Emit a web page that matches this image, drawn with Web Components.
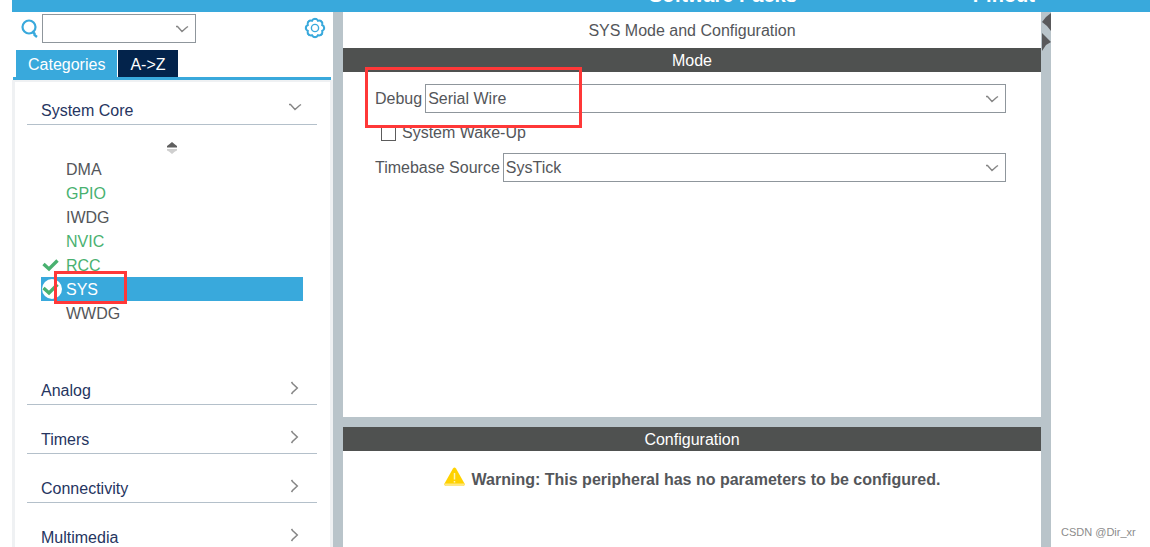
<!DOCTYPE html>
<html lang="en">
<head>
<meta charset="utf-8">
<meta name="viewport" content="width=device-width, initial-scale=1">
<title>SYS Mode and Configuration</title>
<style>
  :root {
    --blue: #39a9dc;
    --navy: #03234b;
    --grey: #54565a;
    --green: #49b170;
    --bar: #4f5150;
    --split: #b9c4ca;
    --edge: #8f969c;
    --mark: #ff3838;
  }
  html, body { height: 100%; }
  body {
    margin: 0;
    background: #fff;
    color: var(--grey);
    font: 16px/24px "Liberation Sans", Arial, sans-serif;
    overflow: hidden;
  }
</style>
</head>
<body>
<cube-app></cube-app>

<script>
/* ------------------------------------------------------------ */
/* Helpers                                                      */
/* ------------------------------------------------------------ */

const CHEVRON_DOWN = `
  <svg class="chevron" width="14" height="9" viewBox="0 0 14 9" fill="none" aria-hidden="true">
    <path d="M1 1.5 2.5 1.5 7 6.5 11.5 2.5 13 1.5" stroke="#868686" stroke-width="1.4"/>
  </svg>`;

const CHEVRON_RIGHT = `
  <svg class="chevron" width="9" height="14" viewBox="0 0 9 14" fill="none" aria-hidden="true">
    <path d="M1.5 1 2.5 2.5 7.3 7 2.5 11.5 1.5 13" stroke="#868686" stroke-width="1.5"/>
  </svg>`;

function render(el, markup) {
  const template = document.createElement('template');
  template.innerHTML = markup;
  el.attachShadow({ mode: 'open' }).appendChild(template.content.cloneNode(true));
}

/* ------------------------------------------------------------ */
/* Top bar                                                      */
/* ------------------------------------------------------------ */

class TopBar extends HTMLElement {
  constructor() {
    super();
    // Only the foot of the menu shows: the bar is scrolled up.
    render(this, `
      <style>
        :host { display: block; height: 12px; overflow: hidden; background: var(--blue); }
        nav {
          height: 100%;
          box-sizing: border-box;
          padding: 0 115px 5px 0;
          display: flex;
          align-items: flex-end;
          justify-content: flex-end;
          gap: 176px;
        }
        a { color: #fff; font-size: 20px; font-weight: bold; text-decoration: none; }
      </style>
      <nav>
        <a href="#packs">Software Packs</a>
        <a href="#pinout">Pinout</a>
      </nav>
    `);
  }
}

/* ------------------------------------------------------------ */
/* Form controls                                                */
/* ------------------------------------------------------------ */

/** A label and a drop-down. Its <option> children become the choices. */
class ComboField extends HTMLElement {
  constructor() {
    super();
    render(this, `
      <style>
        :host { display: flex; align-items: center; gap: 3px; position: relative; }
        label { padding-top: 1px; white-space: nowrap; }
        :host([compact]) { gap: 4px; }
        :host([compact]) label { display: flex; padding: 0; }
        .box { flex: 1; min-width: 0; position: relative; display: flex; }
        select {
          appearance: none;
          width: 100%;
          height: 29px;
          margin: 0;
          padding: 1px 28px 0 2px;
          border: 1px solid var(--edge);
          border-radius: 0;
          background: #fff;
          color: inherit;
          font: inherit;
        }
        .chevron { position: absolute; right: 7px; top: 11px; pointer-events: none; }
      </style>
      <label for="combo"><slot name="icon"></slot><span></span></label>
      <div class="box"><select id="combo"></select>${CHEVRON_DOWN}</div>
      <slot name="mark"></slot>
    `);
  }

  connectedCallback() {
    this.shadowRoot.querySelector('span').textContent = this.getAttribute('label') || '';
    const select = this.shadowRoot.querySelector('select');
    if (this.hasAttribute('hint')) select.setAttribute('aria-label', this.getAttribute('hint'));
    this.querySelectorAll('option').forEach((option) => select.appendChild(option));
  }
}

class CheckField extends HTMLElement {
  constructor() {
    super();
    render(this, `
      <style>
        :host { display: flex; align-items: center; height: 40px; padding-left: 6px; }
        label { display: flex; align-items: center; gap: 6px; }
        input {
          appearance: none;
          box-sizing: border-box;
          width: 15px;
          height: 15px;
          margin: 0;
          border: 1px solid #5c5c5c;
          background: #fff;
        }
        input:checked { background: var(--blue); }
      </style>
      <label><input type="checkbox"><slot></slot></label>
    `);
  }
}

/** Red outline drawn over whatever holds it. */
class MarkBox extends HTMLElement {
  constructor() {
    super();
    render(this, `
      <style>
        :host {
          position: absolute;
          z-index: 2;
          box-sizing: border-box;
          border: 3px solid var(--mark);
          pointer-events: none;
        }
      </style>
    `);
  }
}

/* ------------------------------------------------------------ */
/* Sidebar                                                      */
/* ------------------------------------------------------------ */

class SearchRow extends HTMLElement {
  constructor() {
    super();
    render(this, `
      <style>
        :host { display: flex; justify-content: space-between; height: 36px; padding: 2px 7px 0 9px; }
        combo-field { width: 175px; height: 29px; }
        button { align-self: flex-start; margin-top: 3px; padding: 0; border: 0; background: none; display: flex; }
      </style>
      <combo-field compact hint="Search">
        <svg slot="icon" width="17" height="19" viewBox="0 0 17 19" fill="none" stroke="#39a9dc" aria-hidden="true">
          <circle cx="8" cy="8" r="6.5" stroke-width="2.2"/>
          <path d="M11 12.5 13.5 14.5V16L16 18" stroke-width="2.4"/>
        </svg>
        <option></option>
      </combo-field>
      <button aria-label="Settings">
        <svg width="22" height="22" viewBox="0 0 22 22" fill="none" stroke="#39a9dc" aria-hidden="true">
          <path d="M18.2 14A3.3 3.3 0 0 1 14 18.2A3.3 3.3 0 0 1 8 18.2A3.3 3.3 0 0 1 3.8 14A3.3 3.3 0 0 1 3.8 8A3.3 3.3 0 0 1 8 3.8A3.3 3.3 0 0 1 14 3.8A3.3 3.3 0 0 1 18.2 8A3.3 3.3 0 0 1 18.2 14Z" stroke-width="2"/>
          <circle cx="11" cy="11" r="9.2" stroke-width="1.8" stroke-dasharray="3 4.225" stroke-dashoffset="1.5"/>
          <circle cx="11" cy="11" r="3.6" stroke-width="1.4"/>
        </svg>
      </button>
    `);
  }
}

class TabStrip extends HTMLElement {
  constructor() {
    super();
    render(this, `
      <style>
        :host {
          display: block;
          margin: 0 2px 0 1px;
          padding: 0 3px;
          border-bottom: 3px solid var(--blue);
        }
        div { display: flex; gap: 1px; }
        button {
          height: 27px;
          padding: 2px 12px 0;
          border: 0;
          background: var(--navy);
          color: #fff;
          font: inherit;
        }
        button[aria-selected="true"] { background: var(--blue); }
      </style>
      <div role="tablist">
        <button role="tab" aria-selected="true">Categories</button>
        <button role="tab" aria-selected="false">A-&gt;Z</button>
      </div>
    `);
  }
}

class CategorySection extends HTMLElement {
  constructor() {
    super();
    const open = this.hasAttribute('open');
    render(this, `
      <style>
        :host { display: block; }
        button {
          display: flex;
          justify-content: space-between;
          width: 100%;
          padding: 0 15px 0 14px;
          border: 0;
          border-bottom: 1px solid #b4c0ca;
          background: none;
          color: #26355f;
          font: inherit;
          line-height: 26px;
          text-align: left;
        }
        .chevron { margin-top: 5px; }
        :host(:not([open])) .chevron { margin: 3px 3px 0 0; }
        .body { padding: 0 14px 31px; }
        :host(:not([open])) .body { display: none; }
      </style>
      <button aria-expanded="${open}">
        <span>${this.getAttribute('label')}</span>${open ? CHEVRON_DOWN : CHEVRON_RIGHT}
      </button>
      <div class="body"><slot></slot></div>
    `);
  }
}

class SortHandle extends HTMLElement {
  constructor() {
    super();
    render(this, `
      <style>
        :host { display: flex; justify-content: center; height: 15px; padding-top: 17px; }
      </style>
      <svg width="12" height="12" viewBox="0 0 12 12" aria-hidden="true">
        <path d="M1 5.5V4L3 2.5 6 0 9 2.5 11 4V5.5Z" fill="#5f5f5f"/>
        <path d="M1 7H11V8.5L9 9.5 6 12 3 9.5 1 8.5Z" fill="#cfcfcf"/>
      </svg>
    `);
  }
}

class PeripheralItem extends HTMLElement {
  constructor() {
    super();
    render(this, `
      <style>
        :host { display: block; position: relative; }
        a {
          display: grid;
          grid-template-columns: 25px 1fr;
          align-items: center;
          height: 24px;
          color: var(--grey);
          line-height: 22px;
          text-decoration: none;
        }
        span { padding-top: 2px; }
        :host([active]) a { color: var(--green); }
        :host([selected]) a { background: var(--blue); color: #fff; }
        .tick { visibility: hidden; }
        .disc { fill: none; }
        :host([checked]) .tick { visibility: visible; }
        :host([selected]) .disc { fill: #fff; }
      </style>
      <a href="#">
        <svg class="tick" width="22" height="22" viewBox="0 0 22 22" fill="none" aria-hidden="true">
          <circle class="disc" cx="11" cy="11" r="10"/>
          <path d="M2.5 10 8 15 16.5 6.5" stroke="#49b170" stroke-width="3.4"/>
        </svg>
        <span><slot></slot></span>
      </a>
      <slot name="mark"></slot>
    `);
  }
}

class SideBar extends HTMLElement {
  constructor() {
    super();
    render(this, `
      <style>
        :host { display: flex; flex-direction: column; overflow: hidden; }
        .panel {
          flex: 1;
          min-height: 0;
          overflow: hidden;
          display: flex;
          flex-direction: column;
          gap: 22px;
          padding: 16px 13px 0 12px;
          border: 3px solid #eff1f3;
          border-top-width: 2px;
          border-bottom: 0;
        }
        category-section { flex: none; }
        mark-box { left: 13px; top: -6px; width: 73px; height: 33px; }
      </style>
      <search-row></search-row>
      <tab-strip></tab-strip>
      <div class="panel">
        <category-section label="System Core" open>
          <sort-handle></sort-handle>
          <peripheral-item>DMA</peripheral-item>
          <peripheral-item active>GPIO</peripheral-item>
          <peripheral-item>IWDG</peripheral-item>
          <peripheral-item active>NVIC</peripheral-item>
          <peripheral-item active checked>RCC</peripheral-item>
          <peripheral-item selected checked>SYS<mark-box slot="mark"></mark-box></peripheral-item>
          <peripheral-item>WWDG</peripheral-item>
        </category-section>
        <category-section label="Analog"></category-section>
        <category-section label="Timers"></category-section>
        <category-section label="Connectivity"></category-section>
        <category-section label="Multimedia"></category-section>
      </div>
    `);
  }
}

/* ------------------------------------------------------------ */
/* Main panes                                                   */
/* ------------------------------------------------------------ */

class TitledPane extends HTMLElement {
  constructor() {
    super();
    render(this, `
      <style>
        :host { display: block; background: #fff; }
        h2 {
          margin: 0;
          padding-top: 2px;
          background: var(--bar);
          color: #fff;
          font-size: 16px;
          font-weight: normal;
          line-height: 22px;
          text-align: center;
        }
      </style>
      <slot name="above"></slot>
      <h2>${this.getAttribute('heading')}</h2>
      <slot></slot>
    `);
  }
}

class WarningNote extends HTMLElement {
  constructor() {
    super();
    render(this, `
      <style>
        :host { display: flex; justify-content: center; gap: 7px; padding: 16px 0; font-weight: bold; }
        span { padding-top: 1px; }
      </style>
      <svg width="21" height="20" viewBox="0 0 21 20" aria-hidden="true">
        <path d="M9 1.5Q10.5 -0.5 12 1.5L20.5 16.5Q21 18 19.5 19H1.5Q0 18 .5 16.5Z" fill="#ffd200"/>
        <path d="M.5 16.5H20.5Q21 18 19.5 19H1.5Q0 18 .5 16.5Z" fill="#ffe780"/>
        <path d="M10.5 6V12.5M10.5 14V15.5" stroke="#fff3b5" stroke-width="1.5"/>
      </svg>
      <span><slot></slot></span>
    `);
  }
}

class SplitBar extends HTMLElement {
  constructor() {
    super();
    render(this, `
      <style>
        :host { display: block; flex: none; background: var(--split); }
        svg { display: none; }
        :host([arrows]) svg { display: block; }
      </style>
      <svg width="10" height="40" viewBox="0 0 10 40" fill="#59595b" aria-hidden="true">
        <path d="M10 1V19L6 14 1 10 5 5Z"/>
        <path d="M1 21V39L5 33 10 30 5 25Z"/>
      </svg>
    `);
  }
}

class CubeApp extends HTMLElement {
  constructor() {
    super();
    render(this, `
      <style>
        :host { display: flex; flex-direction: column; height: 100vh; padding-left: 12px; box-sizing: border-box; }
        .work {
          flex: 1;
          min-height: 0;
          display: grid;
          grid-template-columns: 321px 10px minmax(0, 1fr) 10px 99px;
        }
        main { display: flex; flex-direction: column; min-height: 0; }
        .mode { flex: 1; min-height: 0; }
        .row-split { height: 10px; }
        .config { flex: none; min-height: 120px; }
        h1 {
          margin: 0;
          padding-top: 2px;
          font-size: 16px;
          font-weight: normal;
          line-height: 34px;
          text-align: center;
        }
        form { padding: 12px 35px 0 32px; }
        mark-box { left: -10px; top: -17px; width: 217px; height: 61px; }
        aside {
          display: flex;
          align-items: flex-end;
          padding: 0 10px 3px;
          color: #8c8c8c;
          font-size: 11px;
          white-space: nowrap;
        }
      </style>
      <top-bar></top-bar>
      <div class="work">
        <side-bar></side-bar>
        <split-bar></split-bar>
        <main>
          <titled-pane class="mode" heading="Mode">
            <h1 slot="above">SYS Mode and Configuration</h1>
            <form>
              <combo-field label="Debug">
                <option>Serial Wire</option>
                <mark-box slot="mark"></mark-box>
              </combo-field>
              <check-field>System Wake-Up</check-field>
              <combo-field label="Timebase Source">
                <option>SysTick</option>
              </combo-field>
            </form>
          </titled-pane>
          <split-bar class="row-split"></split-bar>
          <titled-pane class="config" heading="Configuration">
            <warning-note>Warning: This peripheral has no parameters to be configured.</warning-note>
          </titled-pane>
        </main>
        <split-bar arrows></split-bar>
        <aside>CSDN @Dir_xr</aside>
      </div>
    `);
  }
}

customElements.define('top-bar', TopBar);
customElements.define('combo-field', ComboField);
customElements.define('check-field', CheckField);
customElements.define('mark-box', MarkBox);
customElements.define('search-row', SearchRow);
customElements.define('tab-strip', TabStrip);
customElements.define('category-section', CategorySection);
customElements.define('sort-handle', SortHandle);
customElements.define('peripheral-item', PeripheralItem);
customElements.define('side-bar', SideBar);
customElements.define('titled-pane', TitledPane);
customElements.define('warning-note', WarningNote);
customElements.define('split-bar', SplitBar);
customElements.define('cube-app', CubeApp);
</script>
</body>
</html>
